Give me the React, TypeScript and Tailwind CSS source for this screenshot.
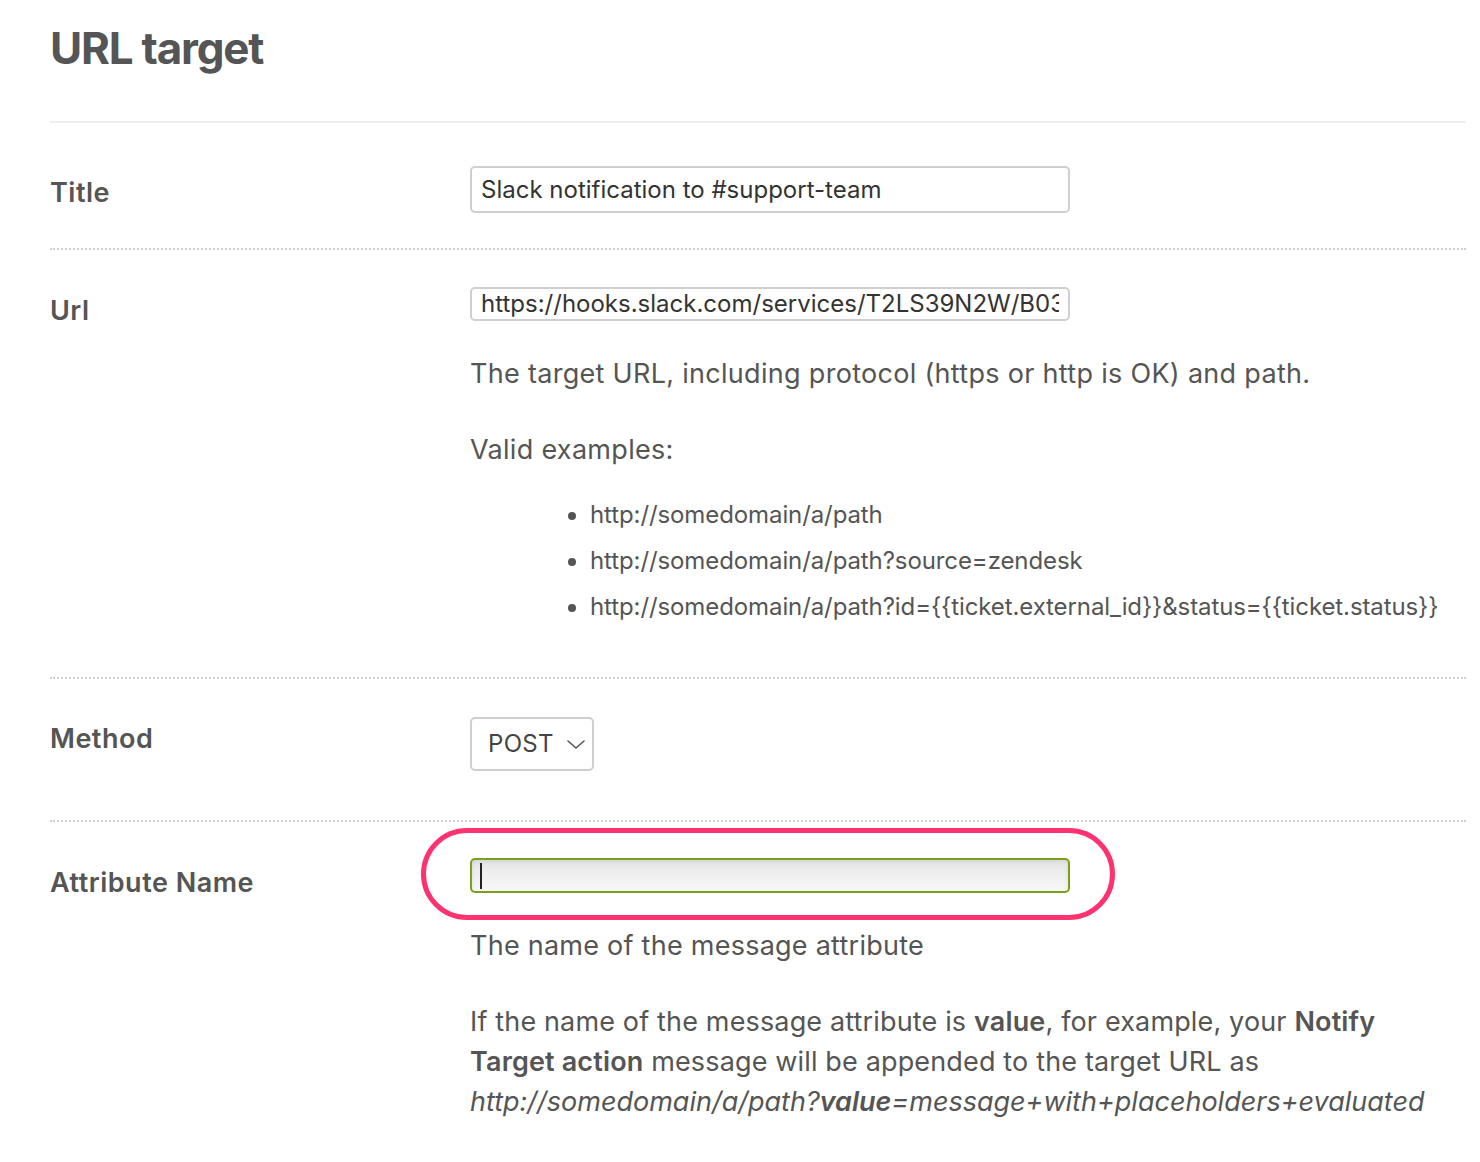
const font = { fontFamily: 'Inter, "Noto Sans", sans-serif' };

export default function App() {
    return (
        <div className="min-h-screen bg-white pl-[50px] pr-[14px] text-[#555]" style={font}>
            {/* Header */}
            <div className="border-b-2 border-[#ededed] pt-[22px] pb-[47px]">
                <h1 className="text-[44px] font-bold leading-[52px] tracking-[-1.2px] text-[#555]">URL target</h1>
            </div>

            {/* Title */}
            <div className="grid grid-cols-[420px_1fr]">
                <label className="pt-[54px] text-[27px] font-semibold leading-[32px] tracking-[0.5px]">Title</label>
                <div className="pt-[43px] pb-[35px]">
                    <input
                        type="text"
                        defaultValue="Slack notification to #support-team"
                        className="block h-[47px] w-[600px] rounded-[5px] border-2 border-[#cfcfcf] px-[9px] text-[24px] text-[#333] outline-none"
                    />
                </div>
            </div>

            {/* Url */}
            <div className="grid grid-cols-[420px_1fr] border-t-2 border-dotted border-[#cfcfcf]">
                <label className="pt-[45px] text-[27px] font-semibold leading-[32px] tracking-[0.5px]">Url</label>
                <div className="pt-[37px] pb-[47px]">
                    <input
                        type="text"
                        defaultValue="https://hooks.slack.com/services/T2LS39N2W/B034KQ8PL/abcdef"
                        className="block h-[34px] w-[600px] rounded-[5px] border-2 border-[#cfcfcf] px-[9px] text-[24px] text-[#333] outline-none"
                    />
                    <p className="mt-[37px] text-[27px] leading-[32px] tracking-[0.3px]">The target URL, including protocol (https or http is OK) and path.</p>
                    <p className="mt-[44px] text-[27px] leading-[32px] tracking-[0.3px]">Valid examples:</p>
                    <ul className="mt-[26px] list-disc pl-[120px] text-[24px] leading-[46px] tracking-[-0.1px]">
                        <li>http://somedomain/a/path</li>
                        <li>http://somedomain/a/path?source=zendesk</li>
                        <li>{'http://somedomain/a/path?id={{ticket.external_id}}&status={{ticket.status}}'}</li>
                    </ul>
                </div>
            </div>

            {/* Method */}
            <div className="grid grid-cols-[420px_1fr] border-t-2 border-dotted border-[#cfcfcf]">
                <label className="pt-[44px] text-[27px] font-semibold leading-[32px] tracking-[0.5px]">Method</label>
                <div className="pt-[38px] pb-[49px]">
                    <div className="flex h-[54px] w-[124px] items-center justify-between rounded-[5px] border-2 border-[#cfcfcf] pl-[16px] pr-[6px] text-[24px] tracking-[0.3px] text-[#444]">
                        <span>POST</span>
                        <svg width="20" height="12" viewBox="0 0 20 12" fill="none" stroke="#555" strokeWidth="1.6" strokeLinecap="round" strokeLinejoin="round">
                            <path d="M2 3 L10 10 L18 3" />
                        </svg>
                    </div>
                </div>
            </div>

            {/* Attribute Name */}
            <div className="grid grid-cols-[420px_1fr] border-t-2 border-dotted border-[#cfcfcf]">
                <label className="pt-[45px] text-[27px] font-semibold leading-[32px] tracking-[0.5px]">Attribute Name</label>
                <div className="pt-[36px] pb-[40px]">
                    <div className="relative w-[600px]">
                        <input
                            type="text"
                            className="block h-[35px] w-[600px] rounded-[5px] border-2 border-[#7aa01d] bg-gradient-to-b from-[#e6e6e6] to-[#f8f8f8] px-[9px] text-[24px] text-[#333] shadow-[inset_0_2px_4px_rgba(0,0,0,0.08)] outline-none"
                        />
                        <span className="absolute left-[10px] top-[5px] h-[26px] w-[2px] bg-[#222]" />
                        {/* highlight annotation */}
                        <div className="pointer-events-none absolute -left-[49px] -top-[30px] -right-[45px] -bottom-[27px] rounded-[46px] border-[5px] border-[#fd3270]" />
                    </div>
                    <p className="mt-[37px] text-[27px] leading-[32px] tracking-[0.25px]">The name of the message attribute</p>
                    <p className="mt-[40px] text-[27px] leading-[40px] tracking-[0.15px]">
                        If the name of the message attribute is <b className="font-semibold">value</b>, for example, your <b className="font-semibold">Notify</b>
                        <br />
                        <b className="font-semibold">Target action</b> message will be appended to the target URL as
                        <br />
                        <i className="tracking-[0px]">
                            http://somedomain/a/path?<b className="font-semibold">value</b>=message+with+placeholders+evaluated
                        </i>
                    </p>
                </div>
            </div>
        </div>
    );
}
